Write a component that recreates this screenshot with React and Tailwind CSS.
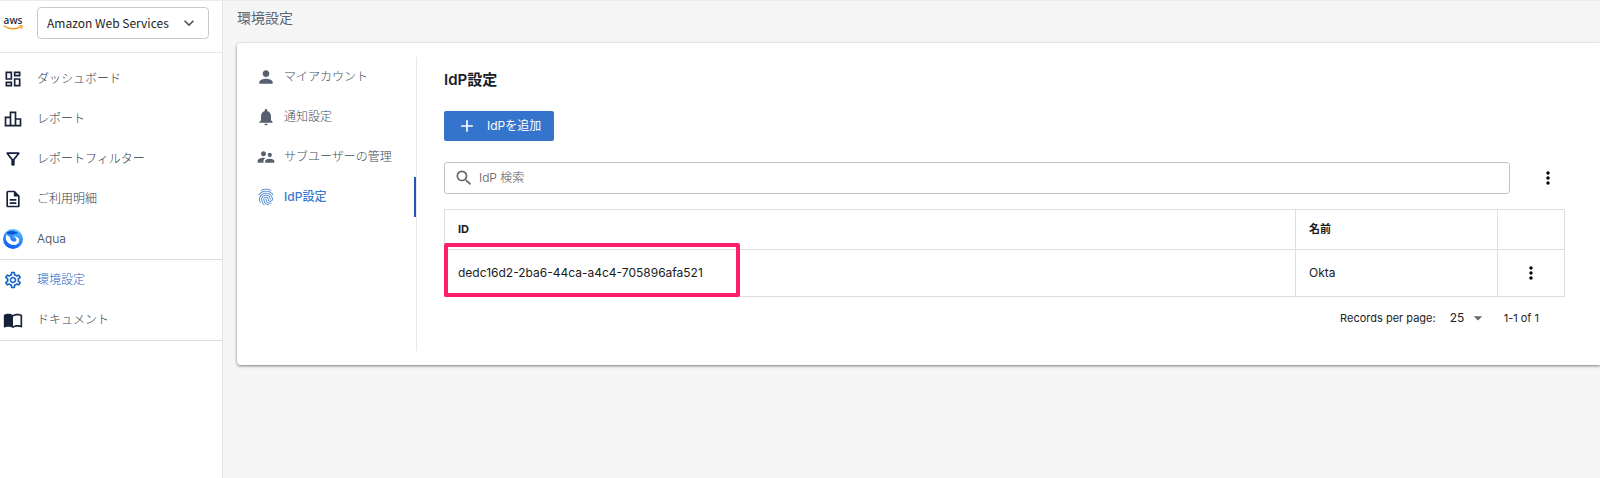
import React from 'react';
import {
  MdOutlineDashboard,
  MdOutlineLeaderboard,
  MdOutlineFilterAlt,
  MdOutlineDescription,
  MdOutlineSettings,
  MdImportContacts,
  MdPerson,
  MdNotifications,
  MdSupervisorAccount,
  MdFingerprint,
  MdSearch,
  MdAdd,
  MdMoreVert,
  MdArrowDropDown,
  MdExpandMore
} from 'react-icons/md';

function AwsLogo() {
  return (
    <svg viewBox="0 0 22 22" className="w-[22px] h-[22px] shrink-0 overflow-visible" role="img" aria-label="aws">
      <text x="10" y="12" textAnchor="middle" fontSize="10" fontWeight="600" fontFamily="Open Sans, sans-serif" fill="#252f3e">aws</text>
      <path d="M1 14c5 3.400 12 3.600 17.200.9" fill="none" stroke="#f59a23" strokeWidth="1.3" strokeLinecap="round" />
      <path d="M16.200 13.800c1.400-.4 2.700-.5 3.200-.2.300.5-.1 2-1 3" fill="none" stroke="#f59a23" strokeWidth="1" strokeLinecap="round" />
    </svg>
  );
}

function AquaLogo() {
  return (
    <svg viewBox="0 0 20 20" className="w-5 h-5" aria-hidden="true">
      <defs>
        <linearGradient id="aquaFill" x1="0.8" y1="0" x2="0.4" y2="1">
          <stop offset="0" stopColor="#5cc4ff" />
          <stop offset="0.5" stopColor="#2f8cfa" />
          <stop offset="1" stopColor="#0f5cf5" />
        </linearGradient>
      </defs>
      <circle cx="10" cy="10" r="10" fill="url(#aquaFill)" />
      <path d="M3.500 3.500C7 1 13 1.500 15.500 4.500C12 4 10.500 6 7.500 5.500C5 5 3.500 4.500 3.500 3.500Z" fill="#0d4fd6" />
      <path d="M3.500 5.500C1.500 10 4 14 8.500 15.800C12.500 17 16.500 14.500 16.200 11C15.800 8 13 7.500 10 7.200C13 8.500 14 10 13.200 11.500C12.500 13 10.500 13 9 12C7 10.700 7.500 9 6.500 7.800C5.500 6.800 4.300 6.500 3.500 5.500Z" fill="#fff" />
    </svg>
  );
}

const mainMenu = [
  { label: 'ダッシュボード', icon: MdOutlineDashboard },
  { label: 'レポート', icon: MdOutlineLeaderboard },
  { label: 'レポートフィルター', icon: MdOutlineFilterAlt },
  { label: 'ご利用明細', icon: MdOutlineDescription },
  { label: 'Aqua', icon: AquaLogo }
];

const subMenu = [
  { label: '環境設定', icon: MdOutlineSettings, active: true },
  { label: 'ドキュメント', icon: MdImportContacts }
];

const settingsMenu = [
  { label: 'マイアカウント', icon: MdPerson },
  { label: '通知設定', icon: MdNotifications },
  { label: 'サブユーザーの管理', icon: MdSupervisorAccount },
  { label: 'IdP設定', icon: MdFingerprint, active: true }
];

function NavList({ items }) {
  return (
    <ul className="border-b border-[#dcdcdc]">
      {items.map(({ label, icon: Icon, active }) => (
        <li key={label}>
          <a href="#" className={`flex items-center h-10 pl-[3px] text-xs font-light ${active ? 'text-[#1f62c4]' : 'text-[#2f3a4a]'}`}>
            <span className={`flex justify-center w-5 mr-[14px] ${active ? 'text-[#1f66c7]' : 'text-[#17213a]'}`}>
              <Icon className="w-5 h-5" />
            </span>
            {label}
          </a>
        </li>
      ))}
    </ul>
  );
}

function Sidebar() {
  return (
    <aside className="w-[223px] shrink-0 bg-white border-r border-[#e6e6e6]">
      <div className="flex items-center h-[52px] pb-[7px] pl-[3px] border-b border-[#e8e8e8]">
        <AwsLogo />
        <div className="relative w-[172px] ml-3">
          <select
            aria-label="Cloud"
            className="appearance-none block w-full h-8 pl-[9px] pr-8 font-['Noto_Sans_CJK_JP',sans-serif] text-xs text-[#1d1d1d] bg-white border border-[#c9c9c9] rounded-sm"
          >
            <option>Amazon Web Services</option>
          </select>
          <MdExpandMore className="absolute right-2.5 top-1.5 w-5 h-5 text-[#555] pointer-events-none" />
        </div>
      </div>
      <nav>
        <div className="pt-[6px]">
          <NavList items={mainMenu} />
        </div>
        <NavList items={subMenu} />
      </nav>
    </aside>
  );
}

function SettingsNav() {
  return (
    <nav className="w-[180px] shrink-0 border-r border-[#e8e8e8]">
      <ul>
        {settingsMenu.map(({ label, icon: Icon, active }) => (
          <li key={label}>
            <a
              href="#"
              className={`flex items-center h-10 pl-[19px] gap-2 text-xs ${
                active ? 'text-[#3a77cf] font-medium border-r-2 border-[#1f57b5]' : 'text-[#414c5a] font-light'
              }`}
            >
              <Icon className={`w-5 h-5 ${active ? '' : 'text-[#56606e]'}`} />
              {label}
            </a>
          </li>
        ))}
      </ul>
    </nav>
  );
}

function IdpTable() {
  return (
    <table className="w-full mt-[15px] border-collapse text-left text-[#1a1a1a]">
      <thead>
        <tr className="h-10 text-[11px]">
          <th className="border border-[#dedede] px-[13px] font-bold">ID</th>
          <th className="w-[202px] border border-[#dedede] px-[13px] font-bold">名前</th>
          <th className="w-[67px] border border-[#dedede]" aria-label="操作"></th>
        </tr>
      </thead>
      <tbody>
        <tr className="h-[47px] text-xs">
          <td className="relative border border-[#dedede] px-[13px]">
            <div className="absolute -left-px -top-[7px] -bottom-px w-[296px] border-4 border-[#ff1f68] rounded-[2px]" />
            dedc16d2-2ba6-44ca-a4c4-705896afa521
          </td>
          <td className="border border-[#dedede] px-[13px]">Okta</td>
          <td className="border border-[#dedede]">
            <button type="button" aria-label="行メニュー" className="block mx-auto text-black">
              <MdMoreVert className="w-5 h-5" />
            </button>
          </td>
        </tr>
      </tbody>
    </table>
  );
}

function IdpSettings() {
  return (
    <section className="flex-1 pl-[27px] pr-[35px] pt-[13px] pb-3">
      <h2 className="text-[15px] leading-5 font-semibold text-[#16202b]">IdP設定</h2>
      <button
        type="button"
        className="flex items-center h-[30px] mt-[21px] px-[13px] gap-2.5 rounded-xs bg-[#3474cd] text-white text-xs"
      >
        <MdAdd className="w-5 h-5" />
        IdPを追加
      </button>
      <div className="flex items-center mt-[21px]">
        <label className="flex items-center flex-1 h-8 pl-[9px] gap-[5px] border border-[#c4c4c4] rounded-[3px]">
          <MdSearch className="w-5 h-5 text-[#666]" />
          <input
            type="text"
            aria-label="IdP 検索"
            placeholder="IdP 検索"
            className="flex-1 text-xs font-light placeholder:text-[#555] outline-none"
          />
        </label>
        <button type="button" aria-label="メニュー" className="flex justify-center w-5 ml-7 mr-[7px] text-black">
          <MdMoreVert className="w-5 h-5" />
        </button>
      </div>
      <IdpTable />
      <div className="flex justify-end items-center h-[42px] pr-[26px] text-[11px] text-[#222]">
        <label htmlFor="rows">Records per page:</label>
        <div className="relative ml-3 mr-4">
          <select id="rows" className="appearance-none block w-10 h-6 pl-0.5 text-xs bg-white">
            <option>25</option>
          </select>
          <MdArrowDropDown className="absolute right-0 top-0.5 w-5 h-5 text-[#666] pointer-events-none" />
        </div>
        <span>1-1 of 1</span>
      </div>
    </section>
  );
}

function App() {
  return (
    <div className="flex min-h-screen bg-[#f5f5f5] border-t border-[#ececec] font-['Inter','Noto_Sans_CJK_JP',sans-serif]">
      <Sidebar />
      <main className="flex-1 min-w-0 pl-[14px]">
        <h1 className="pt-[7px] text-sm leading-5 text-[#5a6472]">環境設定</h1>
        <div className="flex mt-[15px] pt-[14px] pb-[14px] bg-white rounded-l-sm shadow-[0_1px_3px_rgba(0,0,0,0.5)]">
          <SettingsNav />
          <IdpSettings />
        </div>
      </main>
    </div>
  );
}

export default App;
